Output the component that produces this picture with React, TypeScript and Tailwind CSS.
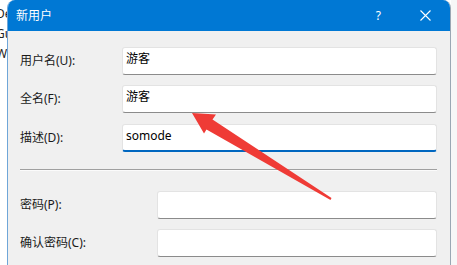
import React from "react";

const font = { fontFamily: '"Noto Sans", "Noto Sans CJK SC", sans-serif' };

function Field({ value, focused }: { value?: string; focused?: boolean }) {
  return (
    <div
      className={
        "flex-1 h-[28px] bg-white rounded-[3px] border border-[#e3e3e3] pl-[3px] pt-[3px] text-[12px] leading-[16px] text-black " +
        (focused ? "border-b-2 border-b-[#0067c0]" : "border-b-[#8b8b8b]")
      }
    >
      {value}
    </div>
  );
}

function Row({ label, value, focused, inputLeft, className }: { label: string; value?: string; focused?: boolean; inputLeft: string; className: string }) {
  return (
    <div className={"flex items-center " + className}>
      <div className={"text-[12px] leading-[16px] text-[#1a1a1a] shrink-0 " + inputLeft}>{label}</div>
      <Field value={value} focused={focused} />
    </div>
  );
}

export default function App() {
  return (
    <div className="relative w-[457px] h-[265px] overflow-hidden bg-white flex" style={font}>
      <div className="w-[7px] shrink-0 overflow-hidden pt-[4px]">
        <div className="ml-[-4px] text-[12px] leading-[20px] text-[#222] whitespace-nowrap">
          <div>De</div>
          <div>Gu</div>
          <div>Wi</div>
        </div>
      </div>
      <div className="w-[444px] shrink-0 h-full flex flex-col rounded-t-[8px] overflow-hidden border-l border-l-[#6fa6d8] border-r border-r-[#9aa7b3]">
        <div className="h-[31px] bg-[#0078d4] flex items-center text-white shrink-0">
          <div className="pl-[8px] text-[12px] leading-[16px]">新用户</div>
          <div className="flex-1" />
          <div className="text-[12px] leading-[16px] mr-[39px]">?</div>
          <svg width="11" height="11" viewBox="0 0 11 11" className="mr-[19px]">
            <path d="M0.5 0.5 L10.5 10.5 M10.5 0.5 L0.5 10.5" stroke="white" strokeWidth="1.1" />
          </svg>
        </div>
        <div className="flex-1 bg-[#f0f0f0] pl-[12px] pr-[13px] flex flex-col">
          <Row label="用户名(U):" value="游客" inputLeft="w-[102px]" className="mt-[16px]" />
          <Row label="全名(F):" value="游客" inputLeft="w-[102px]" className="mt-[10px]" />
          <Row label="描述(D):" value="somode" focused inputLeft="w-[102px]" className="mt-[11px]" />
          <div className="mt-[17px] h-[1px] bg-[#a0a0a0]" />
          <div className="h-[1px] bg-white/70" />
          <Row label="密码(P):" inputLeft="w-[137px]" className="mt-[20px]" />
          <Row label="确认密码(C):" inputLeft="w-[137px]" className="mt-[10px]" />
        </div>
      </div>
      <div className="flex-1 bg-[#f7f7f7]" />
      <svg className="absolute inset-0 pointer-events-none" width="457" height="265" viewBox="0 0 457 265">
        <polygon
          points="192,113 216,114.5 212.5,119.5 331.5,198 330.5,200 206.5,129.5 204,133.5"
          fill="#ef3b36"
        />
      </svg>
    </div>
  );
}
